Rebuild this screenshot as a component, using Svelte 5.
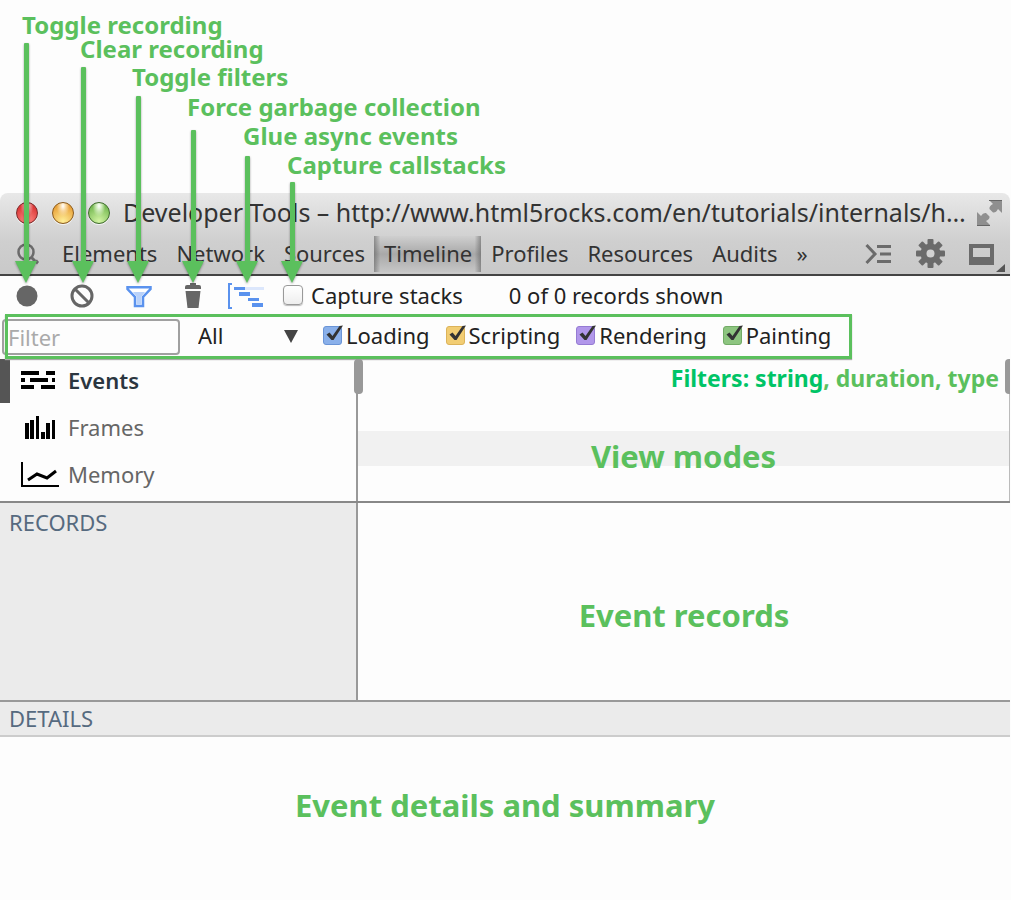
<script>
  const callouts = [
    { text: 'Toggle recording', left: 22, top: 9, arrow: 26, from: 43 },
    { text: 'Clear recording', left: 80, top: 33, arrow: 83, from: 67 },
    { text: 'Toggle filters', left: 132, top: 61, arrow: 138, from: 96 },
    { text: 'Force garbage collection', left: 187, top: 91, arrow: 193, from: 130 },
    { text: 'Glue async events', left: 243, top: 120, arrow: 247, from: 156 },
    { text: 'Capture callstacks', left: 287, top: 149, arrow: 292, from: 182 }
  ];
  const arrowTip = 283;

  const tabs = ['Elements', 'Network', 'Sources', 'Timeline', 'Profiles', 'Resources', 'Audits'];
  let activeTab = $state('Timeline');

  const modes = ['Events', 'Frames', 'Memory'];
  let activeMode = $state('Events');

  let categories = $state([
    { name: 'Loading', fill: '#8ab0ea', border: '#6a94d6', on: true },
    { name: 'Scripting', fill: '#f2cd73', border: '#dcb35a', on: true },
    { name: 'Rendering', fill: '#b197ea', border: '#957bd3', on: true },
    { name: 'Painting', fill: '#8dc580', border: '#72ab66', on: true }
  ]);

  let captureStacks = $state(false);
  let filter = $state('');
</script>

<div class="page">
  <div class="callouts">
    {#each callouts as c}
      <span class="note callout" style:left="{c.left}px" style:top="{c.top}px">{c.text}</span>
      <svg class="arrow" style:left="{c.arrow - 11}px" style:top="{c.from}px" width="22" height={arrowTip - c.from} aria-hidden="true">
        <rect x="9" y="0" width="5" height={arrowTip - c.from - 15} rx="1" />
        <path d="M0 0H22L11 22Z" transform="translate(0 {arrowTip - c.from - 22})" />
      </svg>
    {/each}
  </div>

  <main class="window">
    <header>
      <div class="titlebar">
        <div class="lights">
          <button class="light red" aria-label="Close"></button>
          <button class="light yellow" aria-label="Minimize"></button>
          <button class="light green" aria-label="Zoom"></button>
        </div>
        <h1>Developer Tools – http://www.html5rocks.com/en/tutorials/internals/h…</h1>
        <button class="icon" aria-label="Full screen">
          <svg width="26" height="26" viewBox="0 0 26 26">
            <path fill="#8f8f8f" d="M12 0H25V13L21 9Q19 13 16 12.500L12.500 9Q12 6 16 4Z" />
            <path fill="#8f8f8f" d="M0 12L4 16Q6 12.500 9 13L12.500 16.500Q13 19 9 21L13 25H0Z" />
            <path stroke="#666" fill="none" d="M12 .5H25M0 25.500H13" />
          </svg>
        </button>
      </div>

      <nav class="tabbar">
        <button class="icon inspect" aria-label="Inspect element">
          <svg width="24" height="24" viewBox="0 0 24 24">
            <circle cx="10" cy="10" r="7.500" fill="none" stroke="#6b6b6b" stroke-width="2.500" />
            <path stroke="#6b6b6b" stroke-width="3" d="M15 15L19 19" />
            <path fill="#6b6b6b" d="M18 19L21 17.500L23 20L21 22.500Z" />
          </svg>
        </button>
        {#each tabs as tab}
          <button class="tab" class:active={tab === activeTab} onclick={() => (activeTab = tab)}>{tab}</button>
        {/each}
        <button class="tab" aria-label="More tabs">»</button>
        <div class="tools">
          <button class="icon" aria-label="Show console">
            <svg width="27" height="22" viewBox="0 0 27 22">
              <path fill="none" stroke="#6b6b6b" stroke-width="3" d="M1.500 2L10 11L1.500 20" />
              <path stroke="#6b6b6b" stroke-width="3" d="M12 3.500H26M15 11H26M12 18.500H26" />
            </svg>
          </button>
          <button class="icon" aria-label="Settings">
            <svg width="29" height="29" viewBox="-14.500 -14.500 29 29">
              {#each [0, 45, 90, 135] as angle}
                <rect x="-3" y="-14.500" width="6" height="29" rx="1" fill="#6b6b6b" transform="rotate({angle})" />
              {/each}
              <circle r="10" fill="#6b6b6b" />
              <circle r="4" fill="#d2d2d2" />
            </svg>
          </button>
          <button class="icon dock" aria-label="Dock side">
            <svg width="37" height="32" viewBox="0 0 37 32">
              <path fill="#6b6b6b" fill-rule="evenodd" d="M0 4H25V25H0ZM4 8V17H21V8Z" />
              <path fill="#555" d="M36 24V32H27Z" />
            </svg>
          </button>
        </div>
      </nav>
    </header>

    <div class="toolbar">
      <button class="icon" aria-label="Record">
        <svg width="22" height="24" viewBox="0 0 22 24"><circle cx="11" cy="12" r="10.500" fill="#666" /></svg>
      </button>
      <button class="icon" aria-label="Clear">
        <svg width="24" height="24" viewBox="0 0 24 24" fill="none" stroke="#666" stroke-width="3">
          <circle cx="12" cy="12" r="10" />
          <path d="M5 5L19 19" />
        </svg>
      </button>
      <button class="icon" aria-label="Filter">
        <svg width="26" height="24" viewBox="0 0 26 24">
          <path fill="#fff" stroke="#5a92ee" stroke-width="2.500" d="M1.500 3.200H24.500V5L17 13V22H9V13L1.500 5Z" />
          <path fill="#b9d2fa" d="M7 8H19L15.500 12.500V20.800H10.500V12.500Z" />
        </svg>
      </button>
      <button class="icon" aria-label="Collect garbage">
        <svg width="18" height="26" viewBox="0 0 18 26">
          <path fill="#666" d="M1 6V4Q1 2 3 2H6V0H12V2H15Q17 2 17 4V6Z" />
          <path fill="#666" d="M1.500 8H16.500L14.500 25H3.500Z" />
        </svg>
      </button>
      <button class="icon glue" aria-label="Glue async events">
        <svg width="37" height="26" viewBox="0 0 37 26" fill="#5a92ee">
          <path fill="none" stroke="#5a92ee" stroke-width="2" d="M4 1H1V25H4" />
          <path fill="#dce7fc" d="M16 4H36V7H16Z" />
          <path d="M6 4H17V7H6ZM11 9H22V13H11ZM20 15H31V18H20ZM24 20H35V24H24Z" />
        </svg>
      </button>
      <label class="capture">
        <input type="checkbox" bind:checked={captureStacks} />
        Capture stacks
      </label>
      <span class="count">0 of 0 records shown</span>
    </div>

    <div class="filters">
      <input class="search" type="text" placeholder="Filter" aria-label="Filter" bind:value={filter} />
      <div class="duration">
        <select aria-label="Duration">
          <option>All</option>
          <option>≥ 1 ms</option>
          <option>≥ 15 ms</option>
        </select>
        <svg width="14" height="13" viewBox="0 0 14 13" aria-hidden="true"><path fill="#444" d="M0 0H14L7 13Z" /></svg>
      </div>
      {#each categories as cat}
        <label class="category">
          <span class="box" style:background-color={cat.fill} style:border-color={cat.border}>
            <input type="checkbox" bind:checked={cat.on} />
            {#if cat.on}
              <svg width="19" height="19" viewBox="0 0 19 19" aria-hidden="true">
                <path fill="#333" d="M2.500 10.500L5.500 8.500L8.500 12L15.500 2L19 1.500L9.500 16H7.500Z" />
              </svg>
            {/if}
          </span>
          {cat.name}
        </label>
      {/each}
    </div>

    <section class="overview">
      <div class="modes">
        {#each modes as mode}
          <button class="mode" class:active={mode === activeMode} onclick={() => (activeMode = mode)}>
            <svg width="38" height="28" viewBox="0 0 38 28" aria-hidden="true">
              {#if mode === 'Events'}
                <path d="M0 5H18V9H0ZM25 5H34V9H25ZM0 12H4V16H0ZM9 12H27V16H9ZM31 12H34V16H31ZM0 19H13V23H0ZM20 19H34V23H20Z" />
              {:else if mode === 'Frames'}
                <path d="M4 10H8V26H4ZM9 7H13V26H9ZM15 3H18V26H15ZM20 19H24V26H20ZM25 10H29V26H25ZM31 7H34V26H31Z" />
              {:else}
                <path fill="none" stroke="#000" stroke-width="2" d="M1 2V26H38" />
                <path fill="none" stroke="#000" stroke-width="3" d="M7 20L16 14L26 18L35 11" />
              {/if}
            </svg>
            {mode}
          </button>
        {/each}
      </div>
      <div class="graph">
        <span class="handle start"></span>
        <span class="handle end"></span>
        <p class="note legend"><strong>Filters: string</strong>, duration, type</p>
        <p class="note big">View modes</p>
      </div>
    </section>

    <section class="records">
      <h2>RECORDS</h2>
      <p class="note big">Event records</p>
    </section>

    <section class="details">
      <h2>DETAILS</h2>
      <p class="note big">Event details and summary</p>
    </section>
  </main>
</div>

<style>
  :global(body) {
    margin: 0;
    background: #fdfdfd;
  }
  .page {
    position: relative;
    display: flex;
    flex-direction: column;
    min-height: 100vh;
    box-sizing: border-box;
    padding: 193px 1px 0 0;
    font-family: "Noto Sans", "Open Sans", sans-serif;
    font-size: 22px;
    line-height: 28px;
    color: #222;
  }
  .window {
    display: flex;
    flex-direction: column;
    flex: 1;
  }
  button, input, select {
    font: inherit;
    color: inherit;
    margin: 0;
    padding: 0;
    border: 0;
    background: none;
    box-sizing: border-box;
  }
  h1, h2, p {
    margin: 0;
    font-size: inherit;
    font-weight: normal;
  }
  svg {
    display: block;
  }

  .note {
    font-size: 24px;
    font-weight: 700;
    line-height: 32px;
    color: #5bc05d;
    white-space: nowrap;
  }
  .big {
    font-size: 31px;
    line-height: 44px;
    text-align: center;
  }
  .callout, .arrow {
    position: absolute;
    z-index: 2;
  }
  .arrow {
    fill: #5bc05d;
    pointer-events: none;
    filter: drop-shadow(0 1px 1px rgba(0, 0, 0, 0.35));
  }

  header {
    background: linear-gradient(#e8e8e8, #cfcfcf 60%, #c9c9c9);
    border-bottom: 2px solid #444;
    border-radius: 8px 8px 0 0;
    color: #333;
  }
  .titlebar {
    display: flex;
    align-items: center;
    height: 40px;
    padding: 0 7px 0 16px;
  }
  .lights {
    display: flex;
    gap: 14px;
    margin-right: 13px;
  }
  .light {
    width: 22px;
    height: 22px;
    border: 1px solid #555;
    border-radius: 50%;
    box-shadow: 0 1px 0 #f4f4f4;
  }
  .red {
    border-color: #7c2a2a;
    background: radial-gradient(ellipse at 50% 15%, #fff 0, #f29a9a 20%, transparent 45%), radial-gradient(circle at 50% 85%, #ff8c86, #dd3b3a 70%);
  }
  .yellow {
    border-color: #8a5a1c;
    background: radial-gradient(ellipse at 50% 15%, #fff 0, #f9d8a0 20%, transparent 45%), radial-gradient(circle at 50% 90%, #ffee96, #e9a33b 75%);
  }
  .green {
    border-color: #3f6c2c;
    background: radial-gradient(ellipse at 50% 15%, #fff 0, #cdeab8 20%, transparent 45%), radial-gradient(circle at 50% 90%, #d3f5a4, #79bb55 75%);
  }
  h1 {
    flex: 1;
    min-width: 0;
    padding-bottom: 2px;
    overflow: hidden;
    white-space: nowrap;
    font-size: 25px;
    line-height: 32px;
  }
  .tabbar {
    display: flex;
    align-items: center;
    height: 41px;
  }
  .inspect {
    margin: 0 12px 0 16px;
  }
  .tab {
    height: 36px;
    padding: 0 9px 2px 10px;
  }
  .tab.active {
    background: linear-gradient(90deg, rgba(80, 80, 80, 0.5), transparent 6%, transparent 94%, rgba(80, 80, 80, 0.5)), linear-gradient(#cfcfcf, #a9a9a9 50%, #c6c6c6);
  }
  .tools {
    display: flex;
    align-items: center;
    gap: 24px;
    margin-left: auto;
    padding-right: 4px;
  }
  .dock {
    padding-top: 4px;
  }

  .toolbar {
    display: flex;
    align-items: center;
    height: 38px;
    padding: 0 16px;
    gap: 32px;
  }
  .toolbar .icon {
    padding-top: 2px;
  }
  .glue {
    margin-left: -6px;
  }
  .capture {
    display: flex;
    align-items: center;
    gap: 8px;
    margin-left: -14px;
  }
  .capture input {
    appearance: none;
    width: 20px;
    height: 20px;
    border: 1px solid #999;
    border-radius: 4px;
    background: linear-gradient(#fff, #eee);
    box-shadow: 0 1px 1px #bbb;
  }
  .count {
    margin-left: 14px;
  }

  .filters {
    position: relative;
    display: flex;
    align-items: center;
    align-self: flex-start;
    box-sizing: border-box;
    height: 45px;
    margin-left: 5px;
    padding-right: 21px;
  }
  .filters::after {
    content: "";
    position: absolute;
    inset: 0;
    border: 3px solid #5bc05d;
    box-shadow: 0 1px 1px #aaa;
    pointer-events: none;
  }
  .search {
    width: 178px;
    height: 36px;
    margin-left: -3px;
    padding: 0 4px;
    border: 2px solid #a0a0a0;
    border-radius: 4px;
  }
  .search::placeholder {
    color: #aaa;
    opacity: 1;
  }
  .duration {
    position: relative;
    margin: 0 23px 0 18px;
    padding-bottom: 3px;
  }
  .duration select {
    appearance: none;
    width: 102px;
    height: 32px;
  }
  .duration svg {
    position: absolute;
    right: 2px;
    top: 11px;
    pointer-events: none;
  }
  .category {
    display: flex;
    align-items: center;
    gap: 4px;
    margin-right: 16px;
    padding-bottom: 3px;
  }
  .category:last-child {
    margin-right: 0;
  }
  .box {
    position: relative;
    width: 17px;
    height: 17px;
    border: 1px solid;
    border-radius: 3px;
  }
  .box input {
    display: block;
    appearance: none;
    width: 100%;
    height: 100%;
  }
  .box svg {
    position: absolute;
    left: 0;
    top: -3px;
    pointer-events: none;
  }

  .overview {
    display: flex;
    border-bottom: 2px solid #888;
  }
  .modes {
    box-sizing: border-box;
    width: 356px;
    height: 142px;
    display: flex;
    flex-direction: column;
    gap: 3px;
  }
  .mode {
    display: flex;
    align-items: center;
    gap: 9px;
    height: 44px;
    padding: 0 0 2px 21px;
    color: #666;
  }
  .mode.active {
    padding-left: 11px;
    border-left: 10px solid #555;
    font-weight: 600;
    color: #2b3640;
  }
  .graph {
    position: relative;
    flex: 1;
    border-left: 2px solid #999;
    border-right: 1px solid #bbb;
    background: linear-gradient(transparent 72px, #f1f1f1 72px, #f1f1f1 107px, transparent 107px);
  }
  .handle {
    position: absolute;
    top: 0;
    width: 9px;
    height: 35px;
    border-radius: 4px;
    background: #999;
  }
  .start {
    left: -4px;
  }
  .end {
    right: -1px;
    width: 5px;
    border-radius: 4px 0 0 4px;
  }
  .legend {
    padding: 3px 10px 0 0;
    font-size: 23px;
    text-align: right;
  }
  .legend strong {
    font-weight: inherit;
    color: #00c466;
  }
  .graph .big {
    margin-top: 40px;
  }

  h2 {
    color: #566a7f;
  }
  .records {
    display: flex;
    height: 197px;
    border-bottom: 2px solid #999;
  }
  .records h2 {
    box-sizing: border-box;
    width: 358px;
    padding: 5px 9px;
    border-right: 2px solid #999;
    background: #ebebeb;
  }
  .records .big {
    flex: 1;
    padding-top: 90px;
  }
  .details h2 {
    padding: 2px 9px 3px;
    border-bottom: 2px solid #ccc;
    background: #ebebeb;
  }
  .details .big {
    padding-top: 46px;
  }
</style>
